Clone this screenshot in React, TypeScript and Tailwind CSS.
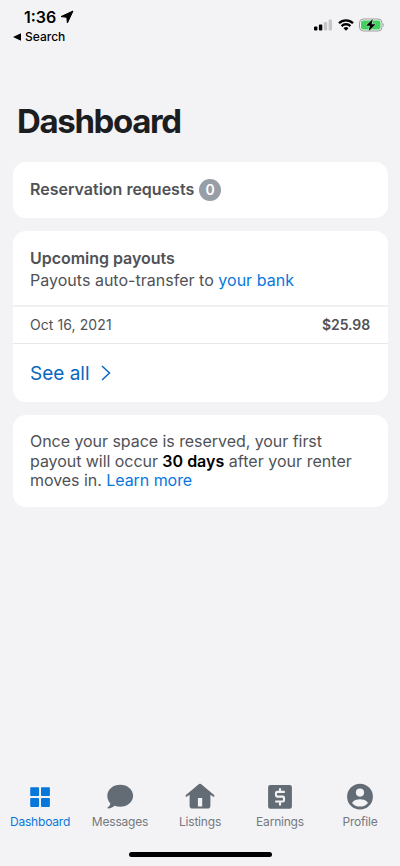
import React from 'react';

// --- Status bar ---
const StatusBar = () => (
    <header className="flex h-[50px] justify-between text-black">
        <div className="pl-[13px] pt-[7px]">
            <div className="flex items-center pl-[11px]">
                <span className="text-[16px] leading-5 font-semibold">1:36</span>
                <svg className="ml-[4px]" width="14" height="14" viewBox="0 0 14 14">
                    <path d="M13 1 L7.4 13 L6.8 7.3 L1 6.6 Z" fill="currentColor" stroke="currentColor" strokeLinejoin="round" />
                </svg>
            </div>
            <div className="mt-[2px] flex items-center">
                <svg width="8" height="8" viewBox="0 0 8 8">
                    <path d="M0 4 L8 0.3 V7.7 Z" fill="currentColor" />
                </svg>
                <span className="ml-[4px] text-[12px] leading-4 font-medium">Search</span>
            </div>
        </div>
        <div className="flex h-[49px] items-center pr-[15px]">
            <svg width="18" height="12" viewBox="0 0 18 12">
                <rect x="0" y="7.5" width="3.4" height="4" rx="1" />
                <rect x="4.9" y="5.5" width="3.4" height="6" rx="1" />
                <rect x="9.8" y="3" width="3.4" height="8.5" rx="1" fill="#c6c6c9" />
                <rect x="14.6" y="0.5" width="3.4" height="11" rx="1" fill="#c6c6c9" />
            </svg>
            <svg className="ml-[6px]" width="16" height="12" viewBox="0 0 16 12">
                <g fill="none" stroke="currentColor" strokeWidth="2.3">
                    <path d="M1 4.3 A10 10 0 0 1 15 4.3" />
                    <path d="M3.6 7.1 A6.2 6.2 0 0 1 12.4 7.1" />
                </g>
                <path d="M8 11.8 L5.5 9.3 A3.6 3.6 0 0 1 10.5 9.3 Z" />
            </svg>
            <svg className="ml-[5px]" width="26" height="14" viewBox="0 0 26 14">
                <rect x="0.5" y="1" width="22.5" height="12" rx="3.8" fill="#f3f3f5" stroke="#9d9da0" />
                <rect x="2" y="2.5" width="19.5" height="9" rx="2.2" fill="#41d15f" />
                <path d="M24 5 Q25.8 7 24 9 Z" fill="#9d9da0" />
                <path d="M13.8 1 L7 7.7 H10.9 L9.6 13.2 L16.7 6.3 H12.6 Z" stroke="#d9f6df" strokeWidth="1" paintOrder="stroke" />
            </svg>
        </div>
    </header>
);

const Card = ({ className = '', children }: { className?: string; children: React.ReactNode }) => (
    <section className={`rounded-[13px] bg-white ${className}`}>{children}</section>
);

// --- Tab bar icons ---
const DashboardIcon = () => (
    <svg width="30" height="30" viewBox="0 0 30 30" fill="currentColor">
        <rect x="5.2" y="5.2" width="8.9" height="8.9" rx="0.8" />
        <rect x="16" y="5.2" width="8.9" height="8.9" rx="0.8" />
        <rect x="5.2" y="16" width="8.9" height="8.9" rx="0.8" />
        <rect x="16" y="16" width="8.9" height="8.9" rx="0.8" />
    </svg>
);

const MessagesIcon = () => (
    <svg width="30" height="30" viewBox="0 0 30 30" fill="currentColor">
        <path d="M15.2 2.8 C8 2.8 2.3 7.6 2.3 13.8 C2.3 17.4 3.7 19.8 5.3 21.6 C5.2 23.4 4 24.7 2.6 25.6 C2.1 26.1 2.3 26.5 3 26.5 C5.9 26.4 8.1 25 9.6 23.8 C11.3 24.5 13.2 24.8 15.2 24.8 C22.4 24.8 28.1 19.9 28.1 13.8 C28.1 7.6 22.4 2.8 15.2 2.8 Z" />
    </svg>
);

const ListingsIcon = () => (
    <svg width="30" height="30" viewBox="0 0 30 30" fill="currentColor">
        <path
            fillRule="evenodd"
            d="M14 2.1 Q15 1.2 16 2.1 L29.1 12.9 Q29.8 13.6 29.2 14.4 Q28.6 15 27.9 14.5 L25.4 12.8 V23.8 Q25.4 26.6 22.6 26.6 H7.4 Q4.6 26.6 4.6 23.8 V12.8 L2.1 14.5 Q1.4 15 0.8 14.4 Q0.2 13.6 0.9 12.9 Z M12.9 15.9 V24.5 H17.2 V15.9 Z"
        />
    </svg>
);

const EarningsIcon = () => (
    <svg width="30" height="30" viewBox="0 0 30 30">
        <rect x="3.1" y="3" width="23.8" height="23.8" rx="2.2" fill="currentColor" />
        <g fill="none" stroke="#f3f3f5" strokeWidth="2.1">
            <path d="M15 6.2 V9.4 M15 20.2 V23.4" />
            <path d="M19.8 9.9 H12.2 Q11 9.9 11 11.1 V13.3 Q11 14.6 12.2 14.6 H17.8 Q19 14.6 19 15.9 V18.2 Q19 19.5 17.8 19.5 H10.2" />
        </g>
    </svg>
);

const ProfileIcon = () => (
    <svg width="30" height="30" viewBox="0 0 30 30">
        <circle cx="15" cy="14.7" r="12.9" fill="currentColor" />
        <circle cx="15" cy="10.6" r="4.1" fill="#f3f3f5" />
        <path d="M7 20.9 C8.4 18.3 11.8 17.3 15 17.3 C18.2 17.3 21.6 18.3 23 20.9 C21.1 23.3 18.3 24.5 15 24.5 C11.7 24.5 8.9 23.3 7 20.9 Z" fill="#f3f3f5" />
    </svg>
);

const TABS = [
    { label: 'Dashboard', icon: DashboardIcon, active: true },
    { label: 'Messages', icon: MessagesIcon, active: false },
    { label: 'Listings', icon: ListingsIcon, active: false },
    { label: 'Earnings', icon: EarningsIcon, active: false },
    { label: 'Profile', icon: ProfileIcon, active: false },
];

const TabBar = () => (
    <nav className="grid grid-cols-5">
        {TABS.map(({ label, icon: Icon, active }) => (
            <a key={label} className={`flex flex-col items-center ${active ? 'text-[#0877dc]' : 'text-[#636c75]'}`}>
                <Icon />
                <span className={`mt-[2px] text-[12px] leading-4 tracking-[-0.2px] ${active ? '' : 'text-[#74797f]'}`}>{label}</span>
            </a>
        ))}
    </nav>
);

export default function App() {
    return (
        <div className="flex h-[866px] w-[400px] flex-col overflow-hidden bg-[#f3f3f5] font-['Inter',sans-serif] text-[#505256]">
            <StatusBar />
            <main className="flex-1 px-[12.5px]">
                <h1 className="mt-[51px] pl-[4.5px] text-[33px] leading-10 font-bold tracking-[-1.35px] text-[#1b1d20]">Dashboard</h1>

                <div className="mt-[21px] flex flex-col gap-[13px]">
                    <Card className="flex h-14 items-center px-[17.5px]">
                        <h2 className="-mt-[2px] text-[16px] leading-5 font-semibold">Reservation requests</h2>
                        <span className="ml-[5px] flex size-[22px] items-center justify-center rounded-full bg-[#979ea6] text-[14px] leading-none font-semibold text-white">0</span>
                    </Card>

                    <Card className="h-[171px]">
                        <div className="h-[76px] border-b-2 border-[#f0f0f2] px-[17.5px] pt-4">
                            <h2 className="text-[16px] leading-[22px] font-semibold tracking-[-0.03px]">Upcoming payouts</h2>
                            <p className="text-[16px] leading-[22px] tracking-[0.02px]">
                                Payouts auto-transfer to <a className="text-[#0877dc]">your bank</a>
                            </p>
                        </div>
                        <div className="flex h-[37px] items-center justify-between border-b border-[#e7e8ea] px-[17.5px] pb-[2px] text-[14px]">
                            <span className="tracking-[0.08px]">Oct 16, 2021</span>
                            <span className="font-semibold tracking-[-0.1px]">$25.98</span>
                        </div>
                        <a className="flex h-[58px] items-center px-[17.5px] text-[19px] text-[#0867c0]">
                            <span className="pt-[2px]">See all</span>
                            <svg className="ml-[11px]" width="10" height="16" viewBox="0 0 10 16">
                                <path d="M1 1 L8.5 8 L1 15" fill="none" stroke="currentColor" strokeWidth="1.5" />
                            </svg>
                        </a>
                    </Card>

                    <Card className="h-[92px] px-[17.5px] pt-[17.4px]">
                        <p className="text-[16px] leading-[19.4px] tracking-[-0.05px]">
                            Once your space is reserved, your first
                            <br />
                            payout will occur <strong className="font-semibold tracking-normal text-black">30 days</strong>
                            <span className="tracking-[0.03px]"> after your renter</span>
                            <br />
                            moves in. <a className="text-[#0877dc]">Learn more</a>
                        </p>
                    </Card>
                </div>
            </main>
            <footer className="h-[84px]">
                <TabBar />
                <div className="mx-auto mt-[22px] h-[5px] w-[143px] rounded-full bg-black" />
            </footer>
        </div>
    );
}
